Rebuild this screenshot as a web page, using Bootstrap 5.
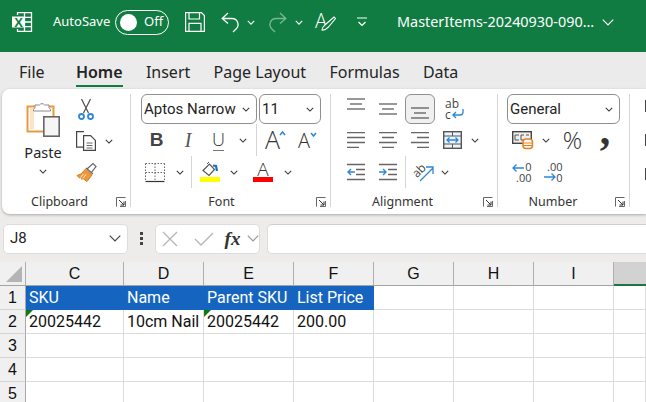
<!DOCTYPE html>
<html lang="en">
<head>
<meta charset="UTF-8" />
<title>Excel</title>
<link href="https://cdn.jsdelivr.net/npm/bootstrap@5.3.0/dist/css/bootstrap.min.css" rel="stylesheet" />
<style>
    html, body { height: 402px; overflow: hidden; }
    body { background: #edecea; font-family: "Noto Sans", "Open Sans", sans-serif; color: #242424; }
    svg { overflow: visible; }

    /* title bar */
    .title-bar { height: 52px; background: #107c41; color: #fff; padding-bottom: 8px; }
    .title-bar svg { display: block; flex: none; }
    .xl-logo { margin-left: 12px; }
    .autosave { margin-left: 21px; font-size: 13px; width: 62px; }
    .switch-box { width: 54px; height: 25px; border: 1px solid #fff; border-radius: 13px; padding-left: 4px; font-size: 13px; }
    .switch-knob { width: 17px; height: 17px; border-radius: 50%; background: #fff; margin-right: 7px; }
    .qat-save { margin-left: 16px; }
    .qat-undo { margin-left: 16px; }
    .qat-chev { margin-left: 8px; }
    .qat-redo { margin-left: 14px; opacity: .45; }
    .qat-pen { margin-left: 12px; }
    .qat-more { margin-left: 21px; }
    .doc-name { margin-left: 30px; font-size: 14.4px; white-space: nowrap; width: 205px; }

    /* tabs */
    .tab-strip { height: 37px; padding-left: 19px; gap: 23.3px; font-size: 16px; background: #ebebeb; }
    .tab-item { line-height: 40px; height: 35px; }
    .tab-item:first-child { margin-right: 8px; }
    .tab-on { font-weight: 600; border-bottom: 2.5px solid #107c41; height: 35px; line-height: 40px; }

    /* ribbon */
    .ribbon-box { margin-left: 2px; height: 125px; background: #fff; border-radius: 8px 0 0 8px; padding: 5px 0 7px; box-shadow: 0 1px 3px rgba(0,0,0,.28); }
    .rb-group { height: 113px; border-right: 1px solid #d4d4d4; flex: none; position: relative; }
    .grp-clip { width: 129px; padding-left: 19px; }
    .grp-font { width: 200px; padding-left: 10px; }
    .grp-align { width: 167px; padding-left: 9px; }
    .grp-num { width: 132px; padding-left: 9px; }
    .rb-body { height: 94px; }
    .rb-row { height: 32px; }
    .rb-row-top { height: 30px; }
    .rb-cap { height: 19px; line-height: 27px; font-size: 12.5px; text-align: center; color: #333; }
    .grp-clip .rb-cap { padding-right: 32px; }
    .grp-font .rb-cap { padding-right: 28px; }
    .grp-align .rb-cap { padding-right: 32px; }
    .grp-num .rb-cap { padding-right: 30px; }
    .launcher { position: absolute; right: 4px; bottom: 0; }
    .ic { display: flex; align-items: center; justify-content: center; flex: none; height: 100%; }
    .w10 { width: 10px; } .w14 { width: 14px; } .w18 { width: 18px; } .w30 { width: 30px; } .w31 { width: 31px; }
    .w32 { width: 32px; } .w34 { width: 34px; } .w35 { width: 35px; }
    .sep-8 { width: 8px; flex: none; display: flex; justify-content: center; }
    .sep-2 { width: 2px; flex: none; display: flex; justify-content: center; }
    .sep-8::after, .sep-2::after { content: ""; width: 1px; height: 100%; background: #d4d4d4; }
    .paste-col { width: 44px; flex: none; font-size: 14.5px; line-height: 18px; text-align: center; }
    .paste-col svg { display: block; margin: 6px auto 6px; }
    .paste-col svg.chev-svg { margin: 8px auto 0; }
    .tool-col { margin-left: 5px; }
    .tool-col .rb-row { height: 31.5px; }
    .tx-b { font-family: "Liberation Sans", sans-serif; font-weight: 700; font-size: 19px; color: #444; }
    .tx-i { font-family: "Liberation Serif", serif; font-style: italic; font-size: 20px; color: #555; }
    .tx-u { font-family: "Open Sans", sans-serif; font-weight: 300; font-size: 18px; color: #333; border-bottom: 1.5px solid #777; height: 22px; line-height: 21px; margin-top: 5px; width: 11px; margin-left: 9px; margin-right: 10px; justify-content: center; display: flex; }
    .tx-pct { font-family: "Open Sans", sans-serif; font-weight: 300; font-size: 24px; color: #333; }
    .tx-comma { font-family: "Liberation Serif", serif; font-weight: 700; font-size: 42px; line-height: 32px; color: #333; padding-bottom: 20px; }

    .rb-select.form-select { height: 30px; border: 1px solid #8f8f8f; border-radius: 6px; font-family: "Roboto", sans-serif; font-size: 15px; color: #242424; padding: 1px 0 0 2px; background-image: url("data:image/svg+xml,%3Csvg xmlns='http://www.w3.org/2000/svg' viewBox='0 0 10 6'%3E%3Cpath d='M1 1l4 4 4-4' fill='none' stroke='%23333' stroke-width='1.300'/%3E%3C/svg%3E"); background-position: right 6px center; background-size: 8px 5px; box-shadow: none; }
    .sel-name { width: 116px; }
    .sel-size { width: 62px; margin-left: 2px; }
    .sel-fmt { width: 113px; }
    .align-on { width: 30px; height: 30px; margin: 0 1px; background: #f0f0f0; border: 1px solid #8f8f8f; border-radius: 6px; }
    .align-on-wrap { width: 32px; flex: none; }
    .wrap-cell { margin-left: 2px; }
    .rb-peek { flex: 1; padding-top: 6px; }
    .peek-mark { width: 2px; height: 12px; background: #444; margin: 0 0 22px 15px; }

    /* formula bar */
    .fx-bar { height: 48px; padding: 9px 0 8px 3px; }
    .name-box, .fx-btns, .fx-input { background: #fff; border: 1px solid #dcdcdc; height: 30px; border-radius: 5px; }
    .name-box { width: 125px; padding: 0 6px; font-family: "Roboto", sans-serif; font-size: 15px; }
    .fx-dots { width: 27px; gap: 2px; flex: none; }
    .fx-dots i { width: 3px; height: 3px; background: #444; display: block; }
    .fx-btns { width: 105px; padding-left: 6px; }
    .fx-sym { font-family: "Liberation Serif", serif; font-style: italic; font-weight: 700; font-size: 19px; width: 24px; text-align: center; margin-left: 8px; line-height: 1; color: #333; }
    .fx-input { flex: 1; margin-left: 7px; border-radius: 5px 0 0 5px; border-right: 0; border-top-color: #cfcfcf; }

    /* sheet */
    .cw25 { width: 26px; } .cw98 { width: 98px; } .cw80 { width: 80px; } .cw90 { width: 90px; } .cw33 { width: 32px; }
    .sheet-tbl { table-layout: fixed; border-collapse: separate; border-spacing: 0; width: 646px; background: #fff; font-family: "Roboto", sans-serif; font-size: 16px; line-height: 22px; color: #111; }
    .sheet-tbl th, .sheet-tbl td { padding: 0; overflow: hidden; white-space: nowrap; }
    .sheet-tbl thead th { height: 24px; background: #f0f0f0; font-weight: 400; text-align: center; font-family: "Liberation Sans", sans-serif; border-right: 1px solid #aeaeae; border-bottom: 1px solid #a3a3a3; }
    .sheet-tbl tbody th { height: 24px; background: #f0f0f0; font-weight: 400; text-align: center; border-right: 1px solid #a8a8a8; border-bottom: 1px solid #d4d4d4; font-family: "Liberation Sans", sans-serif; }
    .sheet-tbl tbody td { height: 24px; border-right: 1px solid #dcdcdc; border-bottom: 1px solid #dcdcdc; padding: 1px 0 0 3px; position: relative; }
    .sheet-tbl thead th.col-sel { background: #d2d2d2; border-bottom: 2px solid #217346; border-right: 0; }
    .corner-cell { position: relative; }
    .corner-cell::after { content: ""; position: absolute; left: 6px; bottom: 3px; border-style: solid; border-width: 0 0 16px 16px; border-color: transparent transparent #b4b4b4 transparent; }
    .sheet-tbl tbody td.hd-blue { background: #1565c0; color: #fff; border-right-color: #1565c0; border-bottom-color: #1565c0; }
    .err-mark::before { content: ""; position: absolute; left: 0; top: 0; border-style: solid; border-width: 7px 7px 0 0; border-color: #0b7d0b transparent transparent transparent; }
</style>
</head>
<body>

<svg width="0" height="0" class="position-absolute">
    <symbol id="chev" viewBox="0 0 10 6"><path d="M1 1l4 4 4-4" fill="none" stroke="#333" stroke-width="1.300"/></symbol>
    <symbol id="launch" viewBox="0 0 10 10"><path d="M.5 9.500V.5h9M9.500 4v5.500H4" fill="none" stroke="#666"/><path d="M3 3l5 5M8 4.500V8H4.500" fill="none" stroke="#333"/></symbol>
    <symbol id="lines-left" viewBox="0 0 18 16"><path d="M0 .5h18M0 5.500h18M0 10.500h18M0 15.500h12" stroke="#666" stroke-width="1.300"/></symbol>
    <symbol id="lines-center" viewBox="0 0 18 16"><path d="M0 .5h18M3 5.500h12M0 10.500h18M3 15.500h12" stroke="#666" stroke-width="1.300"/></symbol>
    <symbol id="lines-right" viewBox="0 0 18 16"><path d="M0 .5h18M6 5.500h12M0 10.500h18M6 15.500h12" stroke="#666" stroke-width="1.300"/></symbol>
</svg>

<!-- title bar -->
<div class="title-bar d-flex align-items-center">
    <svg class="xl-logo" width="20" height="20" viewBox="0 0 20 20">
        <path d="M5.500 3V.7h14v18.600h-14V17M12.500 .7v18.600M12.500 5.300h7M12.500 10h7M12.500 14.700h7" fill="none" stroke="#fff" stroke-width="1.300"/>
        <rect x="0" y="4.500" width="13" height="11" fill="#fff"/>
        <text x="6.500" y="14.500" text-anchor="middle" font-family="Liberation Sans" font-weight="700" font-size="13" fill="#107c41">X</text>
    </svg>
    <span class="autosave">AutoSave</span>
    <div class="switch-box d-flex align-items-center"><span class="switch-knob"></span>Off</div>
    <svg class="qat-save" width="20" height="20" viewBox="0 0 20 20"><path d="M.6.6h15.800l3 3v15.800H.6zM4 .6v6.400h10.500V.6M4 19.400v-8h12v8" fill="none" stroke="#fff" stroke-width="1.200"/></svg>
    <svg class="qat-undo" width="18" height="20" viewBox="0 0 18 20"><path d="M7 1L1.200 6.500l5.800 5M1.200 6.500h9.800a6 6 0 0 1 4.300 10.200L12 20" fill="none" stroke="#fff" stroke-width="1.300"/></svg>
    <svg class="qat-chev" width="8" height="5" viewBox="0 0 10 6"><path d="M1 1l4 4 4-4" fill="none" stroke="#fff" stroke-width="1.500"/></svg>
    <svg class="qat-redo" width="18" height="20" viewBox="0 0 18 20"><path d="M11 1l5.800 5.500-5.800 5M16.800 6.500H7a6 6 0 0 0-4.300 10.200L6 20" fill="none" stroke="#fff" stroke-width="1.300"/></svg>
    <svg class="qat-chev" width="8" height="5" viewBox="0 0 10 6"><path d="M1 1l4 4 4-4" fill="none" stroke="#fff" stroke-width="1.500"/></svg>
    <svg class="qat-pen" width="21" height="20" viewBox="0 0 21 20"><text x="0" y="16" font-family="Open Sans" font-weight="300" font-size="20" fill="#fff">A</text><path d="M7 18c0-3 2-4 4-6l8-7 1.500 1.500-7 8.500c-2 2-4 3.500-6.500 3z" fill="#107c41" stroke="#fff" stroke-width="1.100"/></svg>
    <svg class="qat-more" width="10" height="10" viewBox="0 0 10 10"><path d="M0 1h10M1.500 5l3.500 3.500L8.500 5" fill="none" stroke="#fff" stroke-width="1.200"/></svg>
    <span class="doc-name">MasterItems-20240930-090...</span>
    <svg width="12" height="7" viewBox="0 0 10 6"><path d="M.5.500L5 5 9.500.5" fill="none" stroke="#fff"/></svg>
</div>

<!-- tabs -->
<div class="tab-strip d-flex">
    <span class="tab-item">File</span>
    <span class="tab-on">Home</span>
    <span class="tab-item">Insert</span>
    <span class="tab-item">Page Layout</span>
    <span class="tab-item">Formulas</span>
    <span class="tab-item">Data</span>
</div>

<!-- ribbon -->
<div class="ribbon-box d-flex">
    <div class="rb-group grp-clip">
        <div class="rb-body d-flex">
            <div class="paste-col">
                <svg width="34" height="37" viewBox="0 0 34 37">
                    <path d="M1.500 6.500h26v25h-26z" fill="#fff" stroke="#ea9a3c" stroke-width="2"/>
                    <path d="M4 8h4v21H4z" fill="#fbe3c4"/>
                    <path d="M9 7.500V5h4.500a3 3 0 0 1 5 0H23v2.500l1.500 2v1.500h-17V9.500z" fill="#fff" stroke="#8a8a8a"/>
                    <rect x="17.800" y="16.800" width="15.400" height="19.400" fill="#f6f6f6" stroke="#666" stroke-width="1.600"/>
                </svg>
                Paste
                <svg class="chev-svg" width="8" height="5"><use href="#chev"/></svg>
            </div>
            <div class="tool-col">
                <div class="rb-row d-flex">
                    <span class="ic w32"><svg width="16" height="21" viewBox="0 0 16 21"><path d="M3.500 0l7 14M12.500 0l-7 14" stroke="#555" stroke-width="1.300"/><circle cx="3.500" cy="17.500" r="2.500" fill="none" stroke="#2b88d8" stroke-width="1.800"/><circle cx="12.500" cy="17.500" r="2.500" fill="none" stroke="#2b88d8" stroke-width="1.800"/></svg></span>
                </div>
                <div class="rb-row d-flex">
                    <span class="ic w32"><svg width="20" height="20" viewBox="0 0 20 20"><path d="M8 .6H.6v15.500H7" fill="none" stroke="#444" stroke-width="1.200"/><path d="M7.600 4.600h7l4.800 4.800v10h-11.800z" fill="#fff" stroke="#444" stroke-width="1.200"/><path d="M10.500 12h6M10.500 14.500h6M10.500 17h6" stroke="#666"/></svg></span>
                    <span class="ic w14"><svg width="8" height="5"><use href="#chev"/></svg></span>
                </div>
                <div class="rb-row d-flex">
                    <span class="ic w32"><svg width="21" height="19" viewBox="0 0 21 19"><path d="M11 6l6-5.500 3 3L15 10M10 5l7 6" fill="#fff" stroke="#666" stroke-width="1.200"/><path d="M9.500 6L16 12l-5 6.500-4-3-1 1-1.500-2-1 .5L1 12.500l4-1.500z" fill="#f0973a" stroke="#d67f1e"/><path d="M7 15.500l3-4M4.500 14.500l3-3.500" stroke="#fff" stroke-width=".8"/></svg></span>
                </div>
            </div>
        </div>
        <div class="rb-cap">Clipboard</div>
        <svg class="launcher" width="10" height="10"><use href="#launch"/></svg>
    </div>

    <div class="rb-group grp-font">
        <div class="rb-body">
            <div class="rb-row-top d-flex">
                <select class="form-select rb-select sel-name"><option>Aptos Narrow</option></select>
                <select class="form-select rb-select sel-size"><option>11</option></select>
            </div>
            <div class="rb-row d-flex">
                <span class="ic w31 tx-b">B</span>
                <span class="ic w32 tx-i">I</span>
                <span class="ic tx-u">U</span>
                <span class="ic w18"><svg width="8" height="5"><use href="#chev"/></svg></span>
                <span class="sep-8"></span>
                <span class="ic w31"><svg width="21" height="20" viewBox="0 0 21 20"><text x="0" y="19" font-family="Open Sans" font-weight="300" font-size="25" fill="#333">A</text><path d="M15 5l2.500-3L20 5" fill="none" stroke="#2b88d8" stroke-width="1.500"/></svg></span>
                <span class="ic w32"><svg width="19" height="17" viewBox="0 0 19 17"><text x="0" y="16" font-family="Open Sans" font-weight="300" font-size="20" fill="#333">A</text><path d="M13 1l2.500 3L18 1" fill="none" stroke="#2b88d8" stroke-width="1.500"/></svg></span>
            </div>
            <div class="rb-row d-flex">
                <span class="ic w32 justify-content-start ps-1"><svg width="20" height="19" viewBox="0 0 20 19"><path d="M.5.500h19M.5 9.500h19M10 .5v18M.5.500v18M19.500.500v18" fill="none" stroke="#666" stroke-dasharray="1.500 1.500"/><path d="M.5 18.500h19" stroke="#333" stroke-width="1.200"/></svg></span>
                <span class="ic w14"><svg width="8" height="5"><use href="#chev"/></svg></span>
                <span class="sep-8"></span>
                <span class="ic w30"><svg width="20" height="20" viewBox="0 0 20 20"><path d="M3 8.500L9.500 2l5 5.500-5.500 6z" fill="#fff" stroke="#555" stroke-width="1.200"/><path d="M7 2L9 0" stroke="#555"/><path d="M13 3.500l3 .5 1 5" fill="none" stroke="#1a6fc4" stroke-width="2.200"/><rect y="15" width="20" height="5" fill="#ff0"/></svg></span>
                <span class="ic w18"><svg width="8" height="5"><use href="#chev"/></svg></span>
                <span class="ic w32 ms-1"><svg width="20" height="20" viewBox="0 0 20 20"><text x="10" y="14" text-anchor="middle" font-family="Open Sans" font-weight="300" font-size="19" fill="#333">A</text><rect y="15" width="20" height="5" fill="#f00"/></svg></span>
                <span class="ic w18"><svg width="8" height="5"><use href="#chev"/></svg></span>
            </div>
        </div>
        <div class="rb-cap">Font</div>
        <svg class="launcher" width="10" height="10"><use href="#launch"/></svg>
    </div>

    <div class="rb-group grp-align">
        <div class="rb-body">
            <div class="rb-row-top d-flex">
                <span class="ic w32 align-items-start pt-1"><svg width="18" height="12" viewBox="0 0 18 12"><path d="M0 1h18M3 6h12M0 11h18" stroke="#333" stroke-width="1.200"/></svg></span>
                <span class="ic w32"><svg width="18" height="12" viewBox="0 0 18 12"><path d="M0 1h18M3 6h12M0 11h18" stroke="#333" stroke-width="1.200"/></svg></span>
                <div class="align-on-wrap"><div class="align-on d-flex align-items-end justify-content-center pb-1"><svg width="18" height="12" viewBox="0 0 18 12"><path d="M0 1h18M3 6h12M0 11h18" stroke="#333" stroke-width="1.200"/></svg></div></div>
                <span class="ic w32 wrap-cell"><svg width="19" height="21" viewBox="0 0 19 21"><text x="0" y="9" font-family="Open Sans" font-size="12" fill="#444">ab</text><text x="0" y="20" font-family="Open Sans" font-size="12" fill="#444">c</text><path d="M18 10v3a3 3 0 0 1-3 3H8M11 13l-3 3 3 3" fill="none" stroke="#2b88d8" stroke-width="1.300"/></svg></span>
            </div>
            <div class="rb-row d-flex">
                <span class="ic w32"><svg width="18" height="16"><use href="#lines-left"/></svg></span>
                <span class="ic w32"><svg width="18" height="16"><use href="#lines-center"/></svg></span>
                <span class="ic w32"><svg width="18" height="16"><use href="#lines-right"/></svg></span>
                <span class="ic w32"><svg width="19" height="18" viewBox="0 0 19 18"><rect x=".7" y=".7" width="17.600" height="16.600" fill="#eaf3fb" stroke="#555" stroke-width="1.400"/><path d="M1 5h17M1 13h17" stroke="#555"/><path d="M9.500 1v4M9.500 13v4" stroke="#555"/><path d="M4 9h11M6.500 6.500L4 9l2.500 2.500M12.500 6.500L15 9l-2.500 2.500" fill="none" stroke="#2b88d8" stroke-width="1.300"/></svg></span>
                <span class="ic w14"><svg width="8" height="5"><use href="#chev"/></svg></span>
            </div>
            <div class="rb-row d-flex">
                <span class="ic w32"><svg width="18" height="16" viewBox="0 0 18 16"><path d="M0 .5h18M9 5.500h9M9 10.500h9M0 15.500h18" stroke="#666" stroke-width="1.300"/><path d="M8 8H1M4 5L1 8l3 3" fill="none" stroke="#2b88d8" stroke-width="1.400"/></svg></span>
                <span class="ic w32"><svg width="18" height="16" viewBox="0 0 18 16"><path d="M0 .5h18M9 5.500h9M9 10.500h9M0 15.500h18" stroke="#666" stroke-width="1.300"/><path d="M0 8h7M4 5l3 3-3 3" fill="none" stroke="#2b88d8" stroke-width="1.400"/></svg></span>
                <span class="sep-2"></span>
                <span class="ic w34"><svg width="21" height="20" viewBox="0 0 21 20"><text x="0" y="13" font-family="Open Sans" font-size="12" fill="#444" transform="rotate(-45 6 10)">ab</text><path d="M7 19L20 6M13 5h7v7" fill="none" stroke="#2b88d8" stroke-width="1.300"/></svg></span>
                <span class="ic w10"><svg width="8" height="5"><use href="#chev"/></svg></span>
            </div>
        </div>
        <div class="rb-cap">Alignment</div>
        <svg class="launcher" width="10" height="10"><use href="#launch"/></svg>
    </div>

    <div class="rb-group grp-num">
        <div class="rb-body">
            <div class="rb-row-top d-flex">
                <select class="form-select rb-select sel-fmt"><option>General</option></select>
            </div>
            <div class="rb-row d-flex">
                <span class="ic w30"><svg width="21" height="18" viewBox="0 0 21 18"><rect x=".7" y=".7" width="18.600" height="11.600" fill="#eee" stroke="#444" stroke-width="1.400"/><path d="M3 4h4M3 4v5h4M9 4h3M9 4v5h3M14 4h3" fill="none" stroke="#555"/><rect x="11" y="8" width="9.500" height="9.500" rx="3" fill="#fff" stroke="#e8801a" stroke-width="1.500"/><path d="M11 12h9.500M11 14.500h9.500" stroke="#e8801a"/></svg></span>
                <span class="ic w18"><svg width="8" height="5"><use href="#chev"/></svg></span>
                <span class="ic w35 tx-pct">%</span>
                <span class="ic w30 tx-comma">,</span>
            </div>
            <div class="rb-row d-flex">
                <span class="ic w30"><svg width="20" height="20" viewBox="0 0 20 20"><text x="19.500" y="9" text-anchor="end" font-family="Open Sans" font-size="11" fill="#444">0</text><text x="19.500" y="19.500" text-anchor="end" font-family="Open Sans" font-size="11" fill="#444">.00</text><path d="M12 6H1M4.500 2.500L1 6l3.500 3.500" fill="none" stroke="#2b88d8" stroke-width="1.300"/></svg></span>
                <span class="ic w32"><svg width="20" height="20" viewBox="0 0 20 20"><text x="19.500" y="9" text-anchor="end" font-family="Open Sans" font-size="11" fill="#444">.00</text><text x="19.500" y="19.500" text-anchor="end" font-family="Open Sans" font-size="11" fill="#444">0</text><path d="M1 15h11M8.500 11.500L12 15l-3.500 3.500" fill="none" stroke="#2b88d8" stroke-width="1.300"/></svg></span>
            </div>
        </div>
        <div class="rb-cap">Number</div>
        <svg class="launcher" width="10" height="10"><use href="#launch"/></svg>
    </div>

    <div class="rb-peek">
        <div class="peek-mark"></div>
        <div class="peek-mark"></div>
        <div class="peek-mark"></div>
    </div>
</div>

<!-- formula bar -->
<div class="fx-bar d-flex align-items-center">
    <div class="name-box d-flex align-items-center justify-content-between">J8 <svg width="12" height="7" viewBox="0 0 10 6"><path d="M.5.500L5 5 9.500.5" fill="none" stroke="#444"/></svg></div>
    <div class="fx-dots d-flex flex-column align-items-center"><i></i><i></i><i></i></div>
    <div class="fx-btns d-flex align-items-center">
        <svg width="16" height="16" viewBox="0 0 16 16"><path d="M1 1l14 14M15 1L1 15" stroke="#b5b5b5" stroke-width="1.300"/></svg>
        <svg class="ms-3" width="20" height="14" viewBox="0 0 20 14"><path d="M1 7l6 6L19 1" fill="none" stroke="#b5b5b5" stroke-width="1.300"/></svg>
        <span class="fx-sym">fx</span>
        <svg class="ms-1" width="12" height="7" viewBox="0 0 10 6"><path d="M.5.500L5 5 9.500.5" fill="none" stroke="#999"/></svg>
    </div>
    <div class="fx-input"></div>
</div>

<!-- sheet -->
<table class="sheet-tbl">
    <colgroup>
        <col class="cw25"><col class="cw98"><col class="cw80"><col class="cw90"><col class="cw80"><col class="cw80"><col class="cw80"><col class="cw80"><col class="cw33">
    </colgroup>
    <thead>
        <tr><th class="corner-cell"></th><th>C</th><th>D</th><th>E</th><th>F</th><th>G</th><th>H</th><th>I</th><th class="col-sel"></th></tr>
    </thead>
    <tbody>
        <tr><th>1</th><td class="hd-blue">SKU</td><td class="hd-blue">Name</td><td class="hd-blue">Parent SKU</td><td class="hd-blue">List Price</td><td></td><td></td><td></td><td></td></tr>
        <tr><th>2</th><td class="err-mark">20025442</td><td>10cm Nail</td><td class="err-mark">20025442</td><td>200.00</td><td></td><td></td><td></td><td></td></tr>
        <tr><th>3</th><td></td><td></td><td></td><td></td><td></td><td></td><td></td><td></td></tr>
        <tr><th>4</th><td></td><td></td><td></td><td></td><td></td><td></td><td></td><td></td></tr>
        <tr><th>5</th><td></td><td></td><td></td><td></td><td></td><td></td><td></td><td></td></tr>
    </tbody>
</table>

<script src="https://cdn.jsdelivr.net/npm/bootstrap@5.3.0/dist/js/bootstrap.bundle.min.js"></script>
</body>
</html>
